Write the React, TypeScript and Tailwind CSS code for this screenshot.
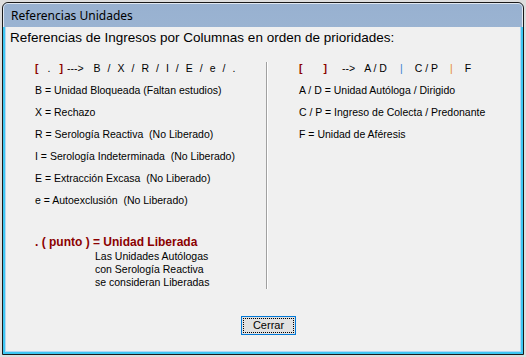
import React from 'react';

const leftRows = [
  'B = Unidad Bloqueada (Faltan estudios)',
  'X = Rechazo',
  'R = Serología Reactiva  (No Liberado)',
  'I = Serología Indeterminada  (No Liberado)',
  'E = Extracción Excasa  (No Liberado)',
  'e = Autoexclusión  (No Liberado)',
];

const rightRows = [
  'A / D = Unidad Autóloga / Dirigido',
  'C / P = Ingreso de Colecta / Predonante',
  'F = Unidad de Aféresis',
];

const codes = ['B', '/', 'X', '/', 'R', '/', 'I', '/', 'E', '/', 'e', '/', '.'];

const App: React.FC = () => {
  return (
    <div className="w-[526px] h-[357px] bg-[#dedede] p-[2px] overflow-hidden">
      <div className="w-[522px] h-[353px] flex flex-col border border-[#1a1a1a] rounded-t-[6px] bg-gradient-to-b from-[#98b1d0] to-[#bdd4ec] overflow-hidden">
        <div className="h-[24px] shrink-0 pl-[7px] flex items-center border-t border-l border-r border-white/70 rounded-t-[5px] font-['Noto_Sans',sans-serif] text-[12px] text-black">
          Referencias Unidades
        </div>
        <div className="flex-1 flex flex-col border-l-2 border-r-2 border-b-2 border-[#3dc6f2]">
          <div className="flex-1 flex flex-col bg-[#f0f0f0] border-l border-r border-b border-[#b2d6f3] font-['Liberation_Sans',Arial,sans-serif] text-black">
            <div className="pl-[4px] pt-[2px] text-[13.5px] leading-[18px]">
              Referencias de Ingresos por Columnas en orden de prioridades:
            </div>

            <div className="flex mt-[10px] pl-[29px]">
              <div className="w-[231px] text-[10.5px]">
                <div className="leading-[22px] whitespace-pre flex">
                  <span className="font-bold text-[#8b0000]">[</span>
                  <span className="ml-[9px]">.</span>
                  <span className="ml-[9px] font-bold text-[#8b0000]">]</span>
                  <span className="ml-[4px]">---&gt;</span>
                  <span className="ml-[10px] flex gap-[7px]">
                    {codes.map((c, i) => (
                      <span key={i}>{c}</span>
                    ))}
                  </span>
                </div>
                {leftRows.map((r) => (
                  <div key={r} className="leading-[22px] whitespace-pre">
                    {r}
                  </div>
                ))}
                <div className="mt-[23px] leading-[16px] text-[12px] font-bold text-[#8b0000] whitespace-pre">
                  . ( punto ) = Unidad Liberada
                </div>
                <div className="pl-[60px] leading-[13px]">
                  <div>Las Unidades Autólogas</div>
                  <div>con Serología Reactiva</div>
                  <div>se consideran Liberadas</div>
                </div>
              </div>

              <div className="flex mt-[5px] h-[227px]">
                <div className="w-px bg-[#a0a0a0]" />
                <div className="w-px bg-white" />
              </div>

              <div className="pl-[31px] text-[10.5px]">
                <div className="leading-[22px] whitespace-pre flex">
                  <span className="font-bold text-[#8b0000]">[</span>
                  <span className="ml-[21px] font-bold text-[#8b0000]">]</span>
                  <span className="ml-[15px]">--&gt;</span>
                  <span className="ml-[9px]">A / D</span>
                  <span className="ml-[13px] text-[#3a7fd2]">|</span>
                  <span className="ml-[12px]">C / P</span>
                  <span className="ml-[12px] text-[#e58a2b]">|</span>
                  <span className="ml-[12px]">F</span>
                </div>
                {rightRows.map((r) => (
                  <div key={r} className="leading-[22px] whitespace-pre">
                    {r}
                  </div>
                ))}
              </div>
            </div>

            <div className="mt-[23px] pl-[235px]">
              <button className="w-[55px] h-[19px] border border-[#0078d7] bg-[#e1e1e1] p-[1px] text-[11px] font-['Liberation_Sans',Arial,sans-serif]">
                <div className="w-full h-full border border-dotted border-black flex items-center justify-center leading-none">
                  Cerrar
                </div>
              </button>
            </div>
          </div>
        </div>
      </div>
    </div>
  );
};

export default App;
